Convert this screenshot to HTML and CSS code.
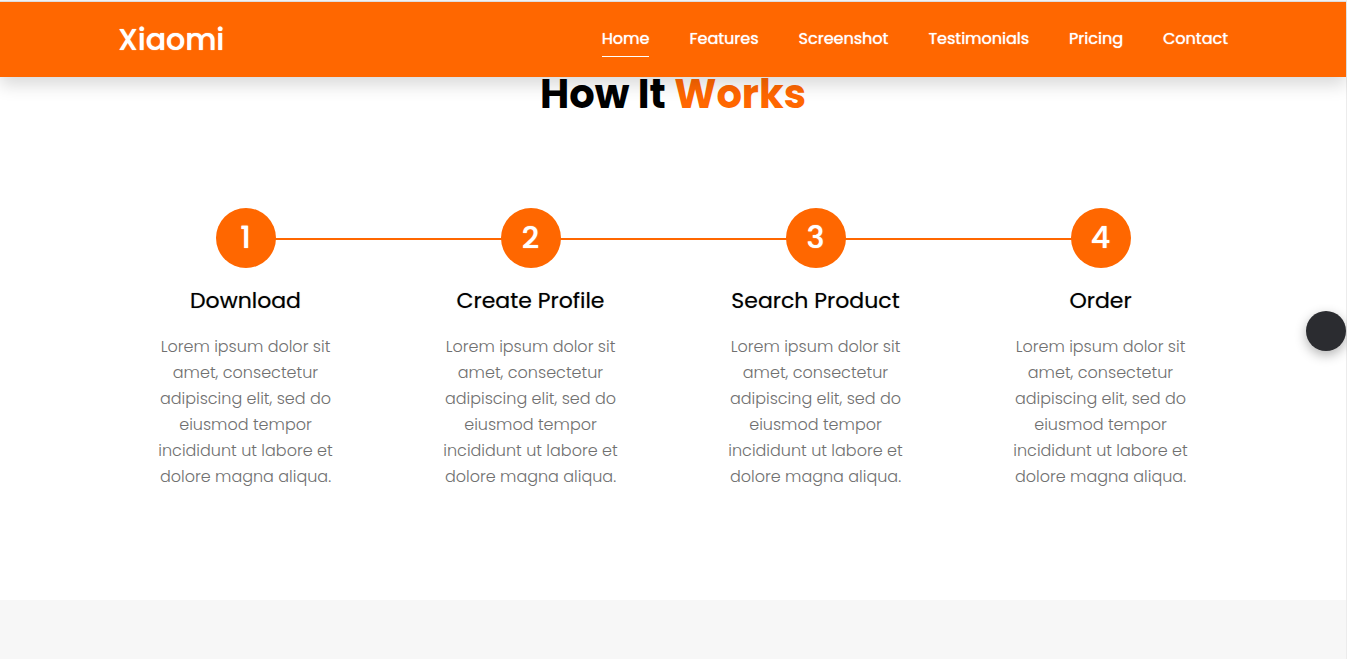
FILE: index.html
```html
<!DOCTYPE html>
<html lang="en">
<head>
<meta charset="utf-8">
<meta name="viewport" content="width=device-width, initial-scale=1">
<title>Xiaomi</title>
<link rel="stylesheet" href="styles.css">
</head>
<body>
<div class="page">
  <header class="navbar">
    <div class="container navbar-inner">
      <a class="brand" href="#home">Xiaomi</a>
      <nav class="nav">
        <a class="nav-link active" href="#home">Home</a>
        <a class="nav-link" href="#features">Features</a>
        <a class="nav-link" href="#screenshot">Screenshot</a>
        <a class="nav-link" href="#testimonials">Testimonials</a>
        <a class="nav-link" href="#pricing">Pricing</a>
        <a class="nav-link" href="#contact">Contact</a>
      </nav>
    </div>
  </header>
  <main>
    <section class="how">
      <h2 class="title">How It <span class="accent">Works</span></h2>
      <div class="steps">
        <article class="step">
          <span class="number">1</span>
          <h3 class="name">Download</h3>
          <p class="text">Lorem ipsum dolor sit amet, consectetur adipiscing elit, sed do eiusmod tempor incididunt ut labore et dolore magna aliqua.</p>
        </article>
        <article class="step">
          <span class="number">2</span>
          <h3 class="name">Create Profile</h3>
          <p class="text">Lorem ipsum dolor sit amet, consectetur adipiscing elit, sed do eiusmod tempor incididunt ut labore et dolore magna aliqua.</p>
        </article>
        <article class="step">
          <span class="number">3</span>
          <h3 class="name">Search Product</h3>
          <p class="text">Lorem ipsum dolor sit amet, consectetur adipiscing elit, sed do eiusmod tempor incididunt ut labore et dolore magna aliqua.</p>
        </article>
        <article class="step">
          <span class="number">4</span>
          <h3 class="name">Order</h3>
          <p class="text">Lorem ipsum dolor sit amet, consectetur adipiscing elit, sed do eiusmod tempor incididunt ut labore et dolore magna aliqua.</p>
        </article>
      </div>
    </section>
  </main>
</div>
<button class="toggle" type="button" aria-label="Toggle theme"></button>
</body>
</html>
```
FILE: styles.css
```css
* {
  box-sizing: border-box;
  margin: 0;
  padding: 0;
}

body {
  font-family: Poppins, Inter, sans-serif;
  font-size: 16px;
  background: #fff;
  color: #000;
}

.page {
  display: flex;
  flex-direction: column;
  min-height: 100vh;
  padding-top: 1px;
  border-right: 1px solid #ececec;
  background: #f7f7f7;
}

.container {
  max-width: 1140px;
  margin: 0 auto;
  padding: 0 15px;
}

.navbar {
  position: relative;
  z-index: 1;
  padding: 15px 0;
  border-top: 1px solid #ddd;
  background: #ff6700;
  box-shadow: 0 8px 16px rgba(0, 0, 0, 0.15);
}

.navbar-inner {
  display: flex;
  align-items: center;
  justify-content: space-between;
}

.brand {
  color: #fff;
  font-size: 30px;
  font-weight: 500;
  line-height: 45px;
  text-decoration: none;
  text-shadow: 0 0 1px #fff;
}

.nav {
  display: flex;
  gap: 40px;
}

.nav-link {
  padding: 4px 0;
  border-bottom: 1px solid transparent;
  color: #fff;
  font-weight: 400;
  line-height: 26px;
  text-decoration: none;
  text-shadow: 0 0 1px #fff;
}

.nav-link.active {
  border-bottom-color: #fff;
}

.how {
  padding-bottom: 110px;
  background: #fff;
}

.title {
  margin-top: -7px;
  margin-bottom: 90px;
  font-size: 40px;
  font-weight: 700;
  line-height: 48px;
  text-align: center;
}

.accent {
  color: #ff6700;
}

.steps {
  display: grid;
  grid-template-columns: repeat(4, 1fr);
  max-width: 1140px;
  margin: 0 auto;
}

.step {
  position: relative;
  display: flex;
  flex-direction: column;
  align-items: center;
  padding: 0 50px;
  text-align: center;
}

.step:not(:last-child)::after {
  content: "";
  position: absolute;
  top: 30px;
  left: 50%;
  width: 100%;
  height: 2px;
  background: #ff6700;
}

.number {
  z-index: 1;
  width: 60px;
  height: 60px;
  border-radius: 50%;
  background: #ff6700;
  color: #fff;
  font-size: 30px;
  font-weight: 500;
  line-height: 60px;
  text-shadow: 0 0 1px #fff;
}

.name {
  margin: 20px 0;
  font-size: 22px;
  font-weight: 400;
  line-height: 26px;
  white-space: nowrap;
  text-shadow: 0 0 1px rgba(0, 0, 0, 0.4);
}

.text {
  color: #707070;
  font-weight: 300;
  line-height: 26px;
}

.toggle {
  position: fixed;
  top: 311px;
  right: 1px;
  width: 40px;
  height: 40px;
  border: 0;
  border-radius: 50%;
  background: #2b2c30;
  box-shadow: 0 4px 12px rgba(0, 0, 0, 0.3);
}
```
